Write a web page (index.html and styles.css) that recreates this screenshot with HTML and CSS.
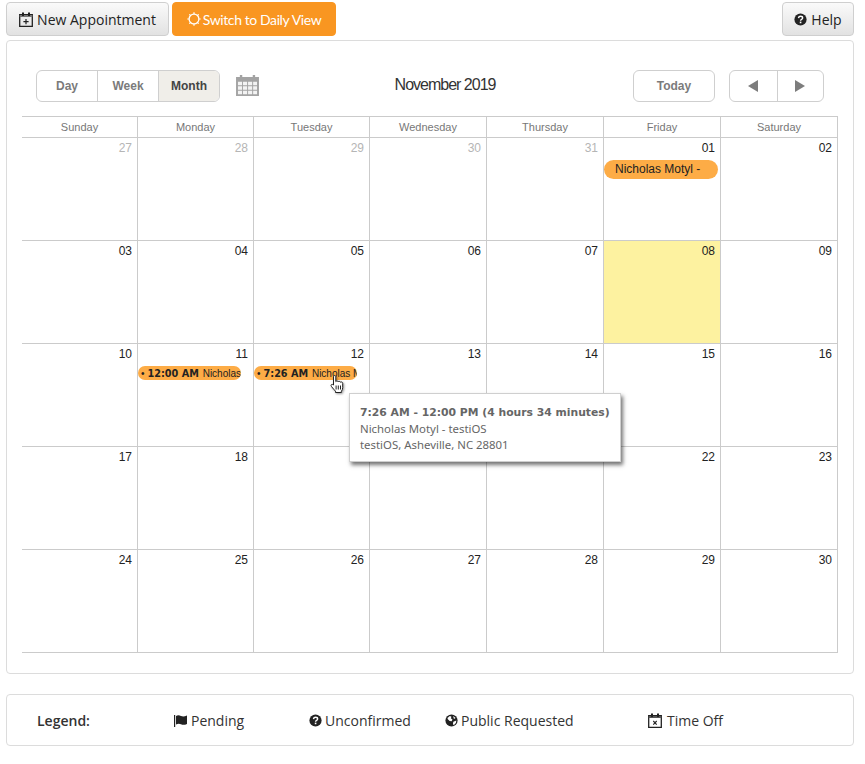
FILE: index.html
```html
<!DOCTYPE html>
<html lang="en">
<head>
<meta charset="utf-8">
<title>Calendar</title>
<link rel="stylesheet" href="styles.css">
</head>
<body>
<div class="page">
  <div class="toolbar">
    <button class="tbtn"><svg class="ico" viewBox="0 0 14 15"><path d="M.7 2.700h12.600v11.600H.7z" fill="none" stroke="#222" stroke-width="1.300"/><path d="M.7 3h12.600v2H.7z" fill="#777"/><path d="M3 .5h2v3.500H3zM9 .5h2v3.500H9z" fill="#222"/><path d="M7 7v5.200M4.400 9.600h5.200" fill="none" stroke="#222" stroke-width="1.200"/></svg>New Appointment</button>
    <button class="tbtn orange"><svg class="ico sun" viewBox="0 0 14 14"><circle cx="7" cy="7" r="4.900" fill="none" stroke="#fff" stroke-width="1.300"/><path d="M7 .3v1.600M7 12.100v1.600M.3 7h1.600M12.100 7h1.600M2.300 2.300l1.100 1.100M10.600 10.600l1.100 1.100M2.300 11.700l1.100-1.100M10.600 3.400l1.100-1.100" stroke="#fff" stroke-width="1.200"/></svg>Switch to Daily View</button>
    <button class="tbtn help"><svg class="ico q" viewBox="0 0 16 16"><circle cx="8" cy="8" r="7.500" fill="#222"/><path d="M5.500 6.200c.2-1.400 1.300-2.200 2.600-2.200 1.400 0 2.500.9 2.500 2 0 1.900-2.500 1.700-2.500 3.400" fill="none" stroke="#fff" stroke-width="1.800"/><rect x="7.100" y="10.600" width="2" height="2" fill="#fff"/></svg>Help</button>
  </div>

  <div class="panel">
    <div class="calbar">
      <div class="left">
        <div class="seg views">
          <span class="s sday">Day</span><span class="s sweek">Week</span><span class="s smonth on">Month</span>
        </div>
        <svg class="calico" viewBox="0 0 24 22"><path d="M0 2h4V0h2.500v2h11V0H20v2h4v20H0z" fill="#a3a3a3"/><path d="M2 7h4.300v3.700H2zM7.300 7h4.300v3.700H7.300zM12.600 7h4.300v3.700h-4.300zM17.900 7H22v3.700h-4.100zM2 11.700h4.300v3.700H2zM7.300 11.700h4.300v3.700H7.300zM12.600 11.700h4.300v3.700h-4.300zM17.900 11.700H22v3.700h-4.100zM2 16.400h4.300v3.700H2zM7.300 16.400h4.300v3.700H7.300zM12.600 16.400h4.300v3.700h-4.300zM17.900 16.400H22v3.700h-4.100z" fill="#f3f3f3"/></svg>
      </div>
      <div class="title">November 2019</div>
      <div class="right">
        <div class="seg today"><span class="s">Today</span></div>
        <div class="seg nav">
          <span class="s"><svg class="tri" viewBox="0 0 12 12"><path d="M1 6l10-6v12z" fill="#7d7d7d"/></svg></span><span class="s"><svg class="tri" viewBox="0 0 12 12"><path d="M11 6L1 0v12z" fill="#7d7d7d"/></svg></span>
        </div>
      </div>
    </div>

    <div class="cal">
      <div class="hd">Sunday</div><div class="hd">Monday</div><div class="hd">Tuesday</div><div class="hd">Wednesday</div><div class="hd">Thursday</div><div class="hd">Friday</div><div class="hd">Saturday</div>

      <div class="d mute"><span class="n">27</span></div><div class="d mute"><span class="n">28</span></div><div class="d mute"><span class="n">29</span></div><div class="d mute"><span class="n">30</span></div><div class="d mute"><span class="n">31</span></div>
      <div class="d"><span class="n">01</span><div class="pill big">Nicholas Motyl -</div></div>
      <div class="d"><span class="n">02</span></div>

      <div class="d"><span class="n">03</span></div><div class="d"><span class="n">04</span></div><div class="d"><span class="n">05</span></div><div class="d"><span class="n">06</span></div><div class="d"><span class="n">07</span></div><div class="d now"><span class="n">08</span></div><div class="d"><span class="n">09</span></div>

      <div class="d"><span class="n">10</span></div>
      <div class="d"><span class="n">11</span><div class="pill small"><span class="dot">•</span><b>12:00 AM</b> Nicholas Motyl - testiOS</div></div>
      <div class="d"><span class="n">12</span><div class="pill small"><span class="dot">•</span><b>7:26 AM</b> Nicholas Motyl - testiOS</div></div>
      <div class="d"><span class="n">13</span></div><div class="d"><span class="n">14</span></div><div class="d"><span class="n">15</span></div><div class="d"><span class="n">16</span></div>

      <div class="d"><span class="n">17</span></div><div class="d"><span class="n">18</span></div><div class="d"><span class="n">19</span></div><div class="d"><span class="n">20</span></div><div class="d"><span class="n">21</span></div><div class="d"><span class="n">22</span></div><div class="d"><span class="n">23</span></div>
      <div class="d"><span class="n">24</span></div><div class="d"><span class="n">25</span></div><div class="d"><span class="n">26</span></div><div class="d"><span class="n">27</span></div><div class="d"><span class="n">28</span></div><div class="d"><span class="n">29</span></div><div class="d"><span class="n">30</span></div>
    </div>

    <div class="tip">
      <div class="tip-t">7:26 AM - 12:00 PM (4 hours 34 minutes)</div>
      <div>Nicholas Motyl - testiOS</div>
      <div>testiOS, Asheville, NC 28801</div>
    </div>
    <svg class="hand" viewBox="0 0 14 18"><path d="M3.500 1.600c0-1.400 2.300-1.400 2.300 0v5c.6-1 2-.8 2.300.2.600-.8 2-.5 2.200.4.800-.6 2.400-.2 2.400 1.200v4.300c0 1.500-.6 2.600-1.300 3.500v1.300H5.500v-1.300C4.500 15 3 13.500 1.600 11.700.2 10 1.600 8.500 3.500 10z" fill="#fff" stroke="#222" stroke-width="1"/><path d="M6.100 10.500v4M8.300 10.500v4M10.500 10.500v4" stroke="#222" stroke-width="1"/></svg>
  </div>

  <div class="legend">
    <div class="lg lg-title">Legend:</div>
    <div class="lg lg-p"><svg class="lico flag" viewBox="0 0 14 12"><path d="M.6 0v12" stroke="#222" stroke-width="1.200"/><path d="M2 1c2-1.200 3.500-.6 5 0s3.500.6 6-.5v8.500c-2.500 1.100-4.500 1-6 .3S4 8.500 2 9.500z" fill="#222"/></svg>Pending</div>
    <div class="lg lg-u"><svg class="lico" viewBox="0 0 16 16"><circle cx="8" cy="8" r="7.500" fill="#222"/><path d="M5.500 6.200c.2-1.400 1.300-2.200 2.600-2.200 1.400 0 2.500.9 2.500 2 0 1.900-2.500 1.700-2.500 3.400" fill="none" stroke="#fff" stroke-width="1.800"/><rect x="7.100" y="10.600" width="2" height="2" fill="#fff"/></svg>Unconfirmed</div>
    <div class="lg lg-r"><svg class="lico" viewBox="0 0 16 16"><circle cx="8" cy="8" r="7.500" fill="#222"/><path d="M3 5l3-2.500 2 .8-.8 2 2 1.500-1 2.200-2.500-.5L3.500 6.500zM10.200 9.500l3.800-1.500-.6 3.200-2.600 2.600-1-1.600zM10 2.500l3 2.500-2 1z" fill="#fff"/></svg>Public Requested</div>
    <div class="lg lg-t"><svg class="lico cal-x" viewBox="0 0 14 15"><path d="M.7 2.700h12.600v11.600H.7z" fill="none" stroke="#222" stroke-width="1.300"/><path d="M.7 3h12.600v2H.7z" fill="#555"/><path d="M3 .5h2v3.500H3zM9 .5h2v3.500H9z" fill="#222"/><path d="M5.300 8l3.400 3.600M8.700 8l-3.400 3.600" fill="none" stroke="#222" stroke-width="1.100"/></svg>Time Off</div>
  </div>
</div>
</body>
</html>
```

FILE: styles.css
```css
* { box-sizing: border-box; }
html, body { margin: 0; padding: 0; background: #fff; }
.page { width: 865px; height: 764px; padding: 2px 11px 0 6px; overflow: hidden; }

.toolbar { display: flex; gap: 3px; height: 34px; }
.tbtn {
  display: flex; align-items: center; justify-content: center;
  width: 163px; height: 34px; padding: 0;
  font: 14px "Open Sans", sans-serif; color: #222;
  background: linear-gradient(#fafafa, #e2e2e2);
  border: 1px solid #cfcfcf; border-radius: 4px;
}
.tbtn.orange {
  width: 164px; background: #f99621; border-color: #f99621; color: #fff;
  font: 14px Lato, sans-serif; letter-spacing: -.4px;
}
.tbtn.help { width: 72px; margin-left: auto; }
.ico { width: 14px; height: 15px; margin-right: 4px; }
.ico.sun { height: 14px; margin-right: 2px; }
.ico.q { width: 13px; height: 13px; }

.panel {
  position: relative;
  margin-top: 4px; height: 634px; padding: 29px 15px 0 15px;
  border: 1px solid #dcdcdc; border-radius: 4px;
}
.calbar { display: flex; justify-content: space-between; height: 46px; position: relative; padding: 0 14px; }
.left, .right { display: flex; align-items: flex-start; }
.seg {
  display: flex; height: 32px;
  border: 1px solid #cfcfcf; border-radius: 6px; overflow: hidden;
  font: bold 12px "Liberation Sans", sans-serif; color: #7b7b7b;
}
.s { display: flex; align-items: center; justify-content: center; height: 100%; }
.s + .s { border-left: 1px solid #cfcfcf; }
.sday { width: 60px; } .sweek { width: 61px; } .smonth { width: 61px; }
.s.on { background: #f0eee9; color: #444; }
.calico { width: 23px; height: 21px; margin: 5px 0 0 16px; }
.title {
  position: absolute; left: 0; right: 0; top: 6px; text-align: center;
  font: 16px "Liberation Sans", sans-serif; color: #333; letter-spacing: -1px;
  padding-left: 30px;
}
.today .s { width: 80px; }
.nav { margin-left: 14px; }
.nav .s { width: 46.500px; }
.tri { width: 12px; height: 12px; }

.cal {
  display: grid;
  grid-template-columns: 116px 116px 116px 117px 117px 117px 117px;
  grid-template-rows: 21px repeat(5, 103px);
  width: 816px;
  border-top: 1px solid #cbcbcb;
  font: 12px "Liberation Sans", sans-serif;
}
.hd {
  display: flex; align-items: center; justify-content: center;
  font-size: 11px; color: #777;
  border-right: 1px solid #cbcbcb; border-bottom: 1px solid #cbcbcb;
}
.d {
  min-width: 0; padding-top: 3px; text-align: right; color: #222;
  border-right: 1px solid #cbcbcb; border-bottom: 1px solid #cbcbcb;
}
.n { display: block; padding-right: 5px; }
.d.mute { color: #b5b5b5; }
.d.now { background: #fdf2a0; }
.pill {
  background: #fdac46; color: #222; text-align: left; white-space: nowrap; overflow: hidden;
}
.pill.big {
  height: 19px; margin: 5px 2px 0 0; padding: 0 0 0 11px; border-radius: 10px;
  font-size: 12px; line-height: 18px;
}
.pill.small {
  height: 14px; margin: 5px 12px 0 0; padding: 0 0 0 3px; border-radius: 7px;
  font-size: 10px; line-height: 15px;
}
.pill.small b { font: bold 9.700px "DejaVu Sans", sans-serif; margin-right: 1px; }
.dot { font-size: 10px; margin-right: 3px; }

.tip {
  position: absolute; left: 342px; top: 352px; width: 272px; height: 69px;
  padding: 11px 0 0 10px;
  background: #fff; border: 1px solid #cfcfcf;
  box-shadow: 2px 3px 4px rgba(0,0,0,.55);
  font: 11.400px/16px "Noto Sans", sans-serif; color: #666;
  white-space: nowrap;
}
.tip-t { font: bold 10.800px/16px "DejaVu Sans", sans-serif; }
.hand {
  position: absolute; left: 323px; top: 334px; width: 14px; height: 18px;
  filter: drop-shadow(1px 1px 1px rgba(0,0,0,.4));
}

.legend {
  position: relative; display: flex; align-items: center;
  margin-top: 20px; height: 52px;
  border: 1px solid #dcdcdc; border-radius: 4px;
  font: 14px "Open Sans", sans-serif; color: #333;
}
.lg { display: flex; align-items: center; position: absolute; top: 16px; }
.lg-title { left: 30px; font-weight: 600; }
.lg-p { left: 167px; } .lg-u { left: 302px; } .lg-r { left: 438px; } .lg-t { left: 641px; }
.lico { width: 13px; height: 13px; margin-right: 3px; }
.lico.flag { width: 14px; height: 12px; margin-right: 3px; }
.lico.cal-x { width: 14px; height: 15px; margin-right: 5px; }
```
